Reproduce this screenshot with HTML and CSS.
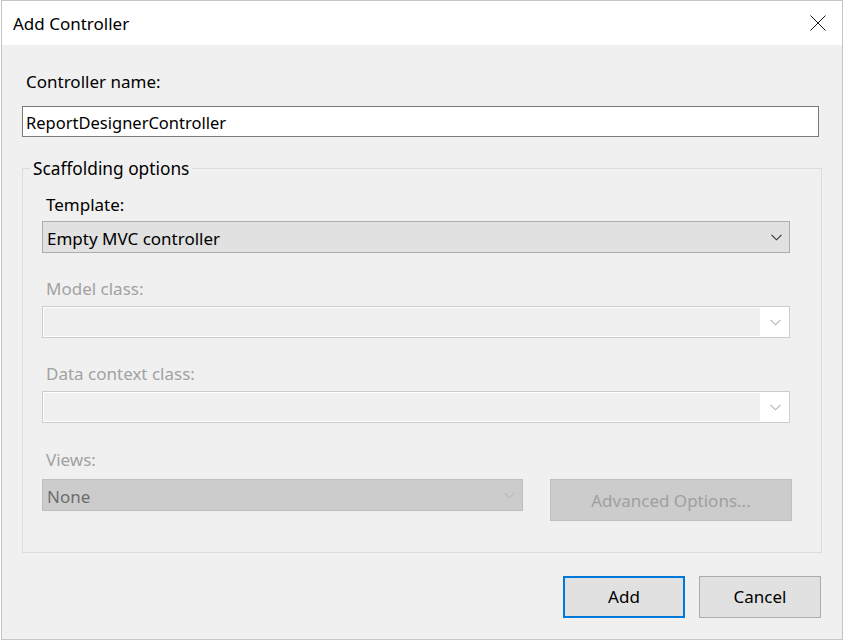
FILE: index.html
```html
<!DOCTYPE html>
<html>
<head>
<meta charset="utf-8">
<title>Add Controller</title>
<link rel="stylesheet" href="styles.css">
</head>
<body>
<div class="window">
  <div class="titlebar">
    <span class="title">Add Controller</span>
    <button class="close" aria-label="Close">
      <svg width="16" height="16" viewBox="0 0 16 16"><path d="M0.5 0.5 L15.5 15.5 M15.5 0.5 L0.5 15.5" stroke="#1a1a1a" stroke-width="1" fill="none"/></svg>
    </button>
  </div>
  <div class="content">
    <div class="label name-label">Controller name:</div>
    <div class="textbox">ReportDesignerController</div>
    <div class="group">
      <span class="legend">Scaffolding options</span>
      <div class="label glabel first">Template:</div>
      <div class="combo enabled">
        <span class="combo-text">Empty MVC controller</span>
        <svg class="chev" width="11" height="7" viewBox="0 0 11 7"><path d="M0.5 0.8 L5.5 5.8 L10.5 0.8" stroke="#333" stroke-width="1.1" fill="none"/></svg>
      </div>
      <div class="label glabel disabled">Model class:</div>
      <div class="combo blank">
        <span class="combo-inner"></span>
        <svg class="chev" width="11" height="7" viewBox="0 0 11 7"><path d="M0.5 0.8 L5.5 5.8 L10.5 0.8" stroke="#b4b4b4" stroke-width="1.1" fill="none"/></svg>
      </div>
      <div class="label glabel disabled">Data context class:</div>
      <div class="combo blank">
        <span class="combo-inner"></span>
        <svg class="chev" width="11" height="7" viewBox="0 0 11 7"><path d="M0.5 0.8 L5.5 5.8 L10.5 0.8" stroke="#b4b4b4" stroke-width="1.1" fill="none"/></svg>
      </div>
      <div class="label glabel disabled views-label">Views:</div>
      <div class="views-row">
        <div class="combo views">
          <span class="combo-text">None</span>
          <svg class="chev" width="11" height="7" viewBox="0 0 11 7"><path d="M0.5 0.8 L5.5 5.8 L10.5 0.8" stroke="#b9b9b9" stroke-width="1.1" fill="none"/></svg>
        </div>
        <button class="btn adv" disabled>Advanced Options...</button>
      </div>
    </div>
    <div class="footer">
      <button class="btn primary">Add</button>
      <button class="btn">Cancel</button>
    </div>
  </div>
</div>
</body>
</html>
```

FILE: styles.css
```css
* { box-sizing: border-box; }
html, body { margin: 0; padding: 0; background: #ffffff; }
body {
  font-family: "Noto Sans", "Open Sans", sans-serif;
  font-size: 17px;
  line-height: 20px;
  color: #000;
}
.window {
  margin-left: 1px;
  width: 842px;
  height: 640px;
  border: 1px solid #c6c6c6;
  background: #f0f0f0;
  display: flex;
  flex-direction: column;
}
.titlebar {
  height: 44px;
  background: #ffffff;
  display: flex;
  align-items: flex-start;
  justify-content: space-between;
  flex-shrink: 0;
}
.title {
  margin-top: 13px;
  margin-left: 11px;
}
.close {
  margin-top: 14px;
  margin-right: 16px;
  width: 16px;
  height: 16px;
  padding: 0;
  border: 0;
  background: transparent;
  display: block;
}
.close svg { display: block; }
.content {
  padding-left: 20px;
  display: flex;
  flex-direction: column;
}
.label { height: 20px; white-space: nowrap; }
.name-label { margin-top: 27px; padding-left: 4px; }
.textbox {
  margin-top: 14px;
  width: 797px;
  height: 31px;
  border: 1px solid #7a7a7a;
  background: #fff;
  padding: 6px 0 0 3px;
  font-size: 16.5px;
  white-space: nowrap;
}
.group {
  position: relative;
  margin-top: 31px;
  width: 800px;
  height: 385px;
  border: 1px solid #dcdcdc;
  padding-left: 19px;
}
.legend {
  position: absolute;
  top: -10px;
  left: 7px;
  padding: 0 3px;
  background: #f0f0f0;
  line-height: 20px;
  white-space: nowrap;
  font-size: 17.3px;
}
.glabel { padding-left: 4px; margin-top: 26px; }
.glabel.first { margin-top: 26px; }
.views-label { margin-top: 27px; }
.disabled { color: #a2a2a2; }
.combo {
  margin-top: 6px;
  width: 748px;
  height: 32px;
  border: 1px solid #adadad;
  background: #e1e1e1;
  display: flex;
  align-items: center;
  position: relative;
}
.combo-text {
  flex: 1;
  padding-left: 4px;
  padding-top: 3px;
  white-space: nowrap;
}
.chev {
  display: block;
  margin-right: 7px;
  margin-left: 6px;
  flex-shrink: 0;
}
.combo.blank {
  margin-top: 7px;
  border-color: #cccccc;
  background: #ffffff;
  padding: 1px;
  align-items: stretch;
}
.combo.blank .combo-inner {
  flex: 1;
  background: #f0f0f0;
}
.combo.blank .chev {
  align-self: center;
  margin-left: 10px;
}
.views-row {
  margin-top: 9px;
  display: flex;
  align-items: flex-start;
}
.combo.views {
  margin-top: 0;
  width: 481px;
  background: #cccccc;
  border-color: #bfbfbf;
  color: #6d6d6d;
}
.btn {
  font-family: "Noto Sans", "Open Sans", sans-serif;
  font-size: 17px;
  line-height: 20px;
  width: 122px;
  height: 42px;
  background: #e1e1e1;
  border: 1px solid #adadad;
  color: #000;
  padding: 0;
  margin: 0;
  display: block;
}
.btn.adv {
  margin-left: 27px;
  width: 242px;
  background: #cccccc;
  border-color: #bfbfbf;
  color: #a0a0a0;
  padding-top: 2px;
}
.btn.primary {
  border: 2px solid #0078d7;
}
.footer {
  margin-top: 23px;
  width: 799px;
  display: flex;
  justify-content: flex-end;
  gap: 14px;
}
```
